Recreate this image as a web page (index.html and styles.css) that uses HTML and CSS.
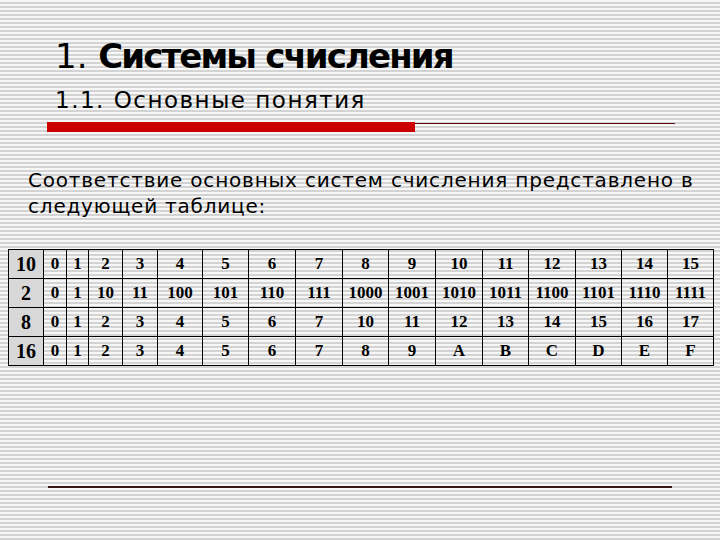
FILE: index.html
```html
<!DOCTYPE html>
<html lang="ru">
<head>
<meta charset="utf-8">
<title>Системы счисления</title>
<link rel="stylesheet" href="styles.css">
</head>
<body>
<div class="slide">
  <h1 class="title"><span class="num">1.</span> <b>Системы счисления</b></h1>
  <h2 class="subtitle">1.1. Основные понятия</h2>
  <div class="rule"><div class="rule-bar"></div><div class="rule-line"></div></div>
  <p class="text">Соответствие основных систем счисления представлено в следующей таблице:</p>
  <table class="bases">
    <colgroup>
      <col class="c0"><col class="c1"><col class="c2"><col class="c3"><col class="c4">
      <col class="c5"><col class="c6"><col class="c7"><col class="c7"><col class="c6">
      <col class="c7"><col class="c7"><col class="c6"><col class="c7"><col class="c6">
      <col class="c6"><col class="c6">
    </colgroup>
    <tr><th>10</th><td>0</td><td>1</td><td>2</td><td>3</td><td>4</td><td>5</td><td>6</td><td>7</td><td>8</td><td>9</td><td>10</td><td>11</td><td>12</td><td>13</td><td>14</td><td>15</td></tr>
    <tr><th>2</th><td>0</td><td>1</td><td>10</td><td>11</td><td>100</td><td>101</td><td>110</td><td>111</td><td>1000</td><td>1001</td><td>1010</td><td>1011</td><td>1100</td><td>1101</td><td>1110</td><td>1111</td></tr>
    <tr><th>8</th><td>0</td><td>1</td><td>2</td><td>3</td><td>4</td><td>5</td><td>6</td><td>7</td><td>10</td><td>11</td><td>12</td><td>13</td><td>14</td><td>15</td><td>16</td><td>17</td></tr>
    <tr><th>16</th><td>0</td><td>1</td><td>2</td><td>3</td><td>4</td><td>5</td><td>6</td><td>7</td><td>8</td><td>9</td><td>A</td><td>B</td><td>C</td><td>D</td><td>E</td><td>F</td></tr>
  </table>
  <div class="footer-line"></div>
</div>
</body>
</html>
```

FILE: styles.css
```css
html, body {
  margin: 0;
  padding: 0;
}
body {
  width: 720px;
  height: 540px;
  overflow: hidden;
  background: repeating-linear-gradient(to bottom, #f7f7f7 0, #f7f7f7 2px, #d3d3d3 2px, #d3d3d3 4px);
  font-family: "DejaVu Sans", Verdana, sans-serif;
  color: #000;
}
.slide {
  display: flex;
  flex-direction: column;
  padding-top: 36px;
}
.title {
  margin: 0 0 0 55px;
  font-size: 34px;
  line-height: 40px;
  font-weight: normal;
  white-space: nowrap;
}
.title b {
  font-weight: bold;
  letter-spacing: -1.9px;
}
.subtitle {
  margin: 10px 0 0 55px;
  font-size: 23px;
  line-height: 28px;
  font-weight: normal;
  letter-spacing: 1.5px;
  white-space: nowrap;
}
.rule {
  display: flex;
  align-items: flex-start;
  margin: 8px 0 0 47px;
}
.rule-bar {
  width: 368px;
  height: 10px;
  background: #cc0000;
}
.rule-line {
  width: 260px;
  height: 1px;
  margin-top: 1px;
  background: #5a0a0a;
}
.text {
  margin: 35px 0 0 28px;
  width: 690px;
  font-size: 20px;
  line-height: 26px;
  letter-spacing: 0.8px;
}
.bases {
  margin: 30px 0 0 8px;
  width: 705px;
  table-layout: fixed;
  border-collapse: collapse;
  font-family: "Liberation Serif", "Times New Roman", serif;
  font-weight: bold;
  font-size: 17px;
}
.bases th, .bases td {
  border: 1px solid #000;
  height: 28px;
  padding: 0;
  text-align: center;
  vertical-align: middle;
}
.bases th {
  background: #d8d8d8;
  font-size: 20px;
}
.c0 { width: 35px; }
.c1 { width: 23px; }
.c2 { width: 22px; }
.c3 { width: 34px; }
.c4 { width: 35px; }
.c5 { width: 45px; }
.c6 { width: 46px; }
.c7 { width: 47px; }
.footer-line {
  margin: 120px 0 0 48px;
  width: 624px;
  height: 2px;
  background: #3a1616;
}
```
